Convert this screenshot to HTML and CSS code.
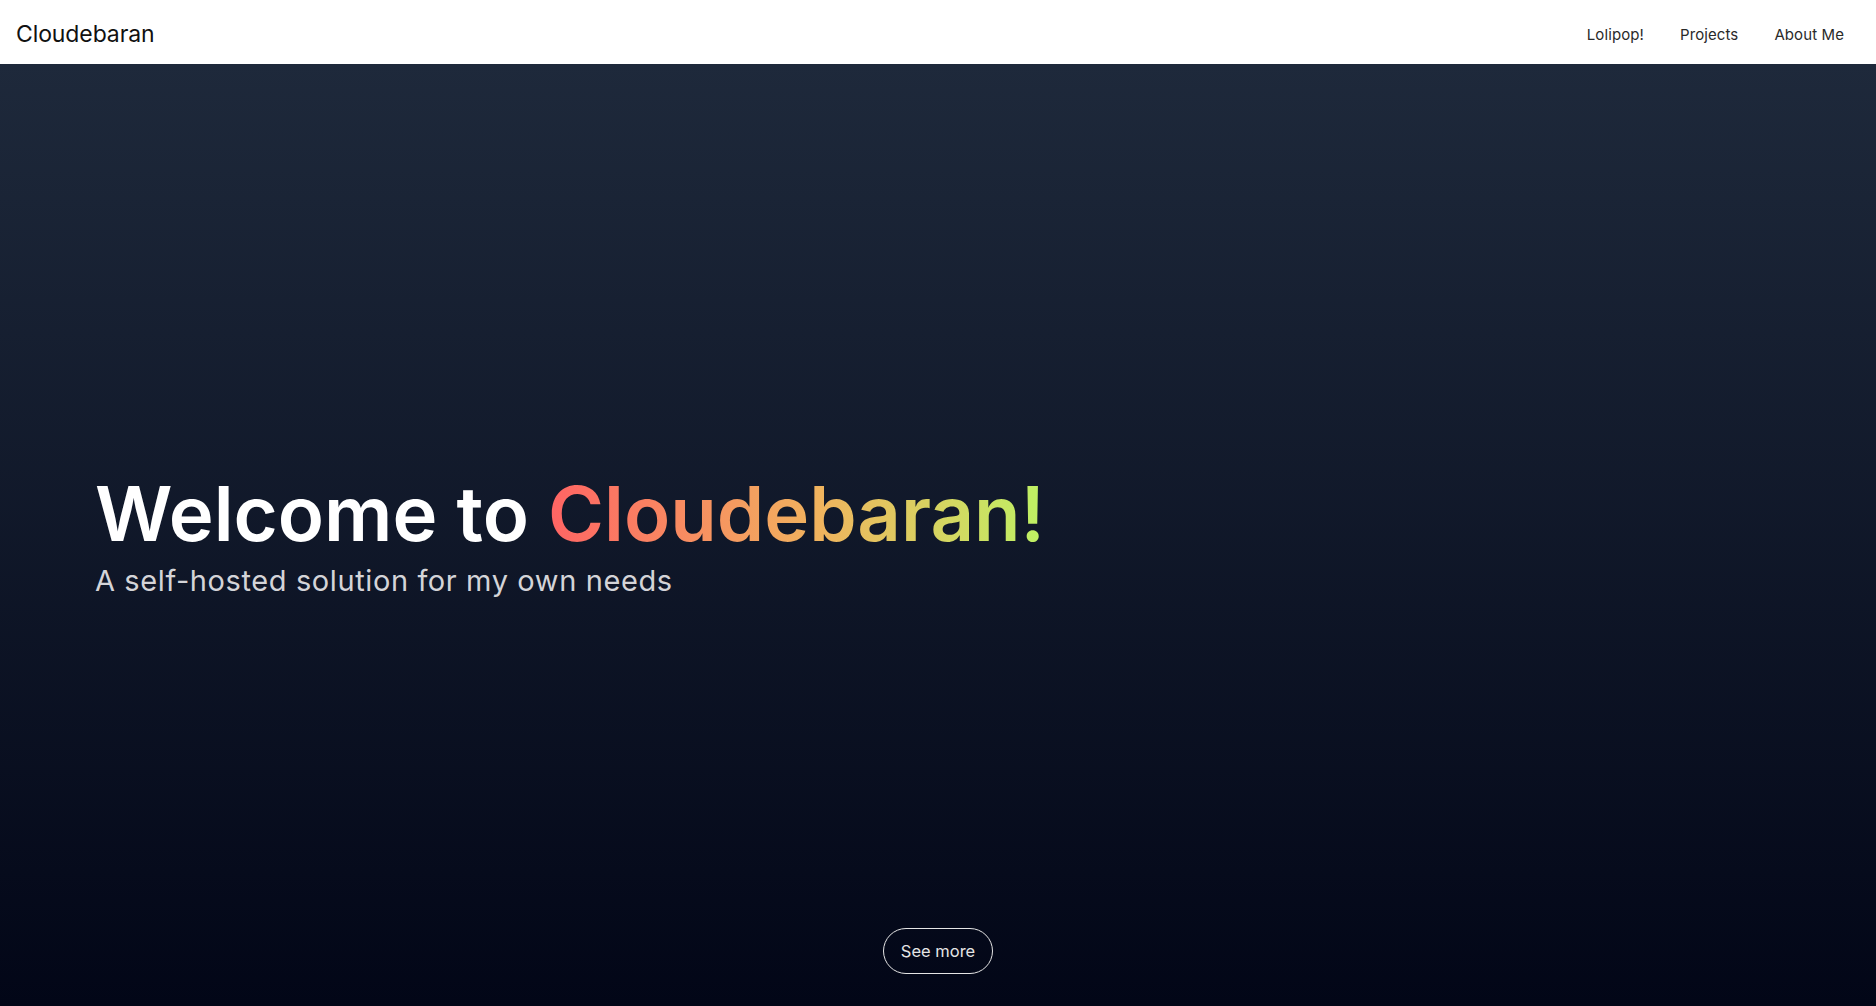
FILE: index.html
```html
<!DOCTYPE html>
<html lang="en">
<head>
    <meta charset="UTF-8">
    <meta name="viewport" content="width=device-width, initial-scale=1.0">
    <title>Cloudebaran</title>
    <link rel="stylesheet" href="styles.css">
</head>
<body>
    <header class="navbar">
        <a class="brand" href="#">Cloudebaran</a>
        <nav class="nav-links">
            <a href="#">Lolipop!</a>
            <a href="#">Projects</a>
            <a href="#">About Me</a>
        </nav>
    </header>

    <main class="hero">
        <div class="intro">
            <h1>Welcome to <span class="highlight">Cloudebaran!</span></h1>
            <p class="tagline">A self-hosted solution for my own needs</p>
        </div>
        <div class="hero-bottom">
            <a class="see-more" href="#">See more</a>
        </div>
    </main>
</body>
</html>
```

FILE: styles.css
```css
* {
    box-sizing: border-box;
}
html, body {
    height: 100%;
}
body {
    margin: 0;
    font-family: Inter, "Noto Sans", sans-serif;
    display: flex;
    flex-direction: column;
    background: #020617;
}
a {
    text-decoration: none;
    color: inherit;
}
.navbar {
    height: 64px;
    flex-shrink: 0;
    background: #fff;
    display: flex;
    align-items: center;
    justify-content: space-between;
    padding: 4px 16px 0;
}
.brand {
    font-size: 23px;
    color: #111;
    letter-spacing: -0.1px;
}
.nav-links {
    display: flex;
    gap: 36px;
    padding-right: 16px;
}
.nav-links a {
    font-size: 15px;
    letter-spacing: 0.1px;
    color: #2a2a2a;
}
.hero {
    flex: 1;
    display: grid;
    grid-template-rows: 1fr auto 1fr;
    background: linear-gradient(to bottom, #1e293b, #020617);
    color: #fff;
}
.intro {
    grid-row: 2;
    padding-left: 95px;
}
.intro h1 {
    margin: 0;
    font-size: 76px;
    font-weight: 600;
    line-height: 1.1;
}
.highlight {
    background: linear-gradient(to right, #ff6464, #f0b45e 55%, #bef264);
    -webkit-background-clip: text;
    background-clip: text;
    color: transparent;
}
.tagline {
    margin: 7px 0 0;
    font-size: 29px;
    color: #d4d4d8;
    letter-spacing: 0.6px;
}
.hero-bottom {
    grid-row: 3;
    display: flex;
    justify-content: center;
    align-items: flex-end;
    padding-bottom: 32px;
}
.see-more {
    border: 1px solid #e5e5e5;
    border-radius: 999px;
    padding: 12px 17px;
    font-size: 16.5px;
    color: #e5e5e5;
}
```
